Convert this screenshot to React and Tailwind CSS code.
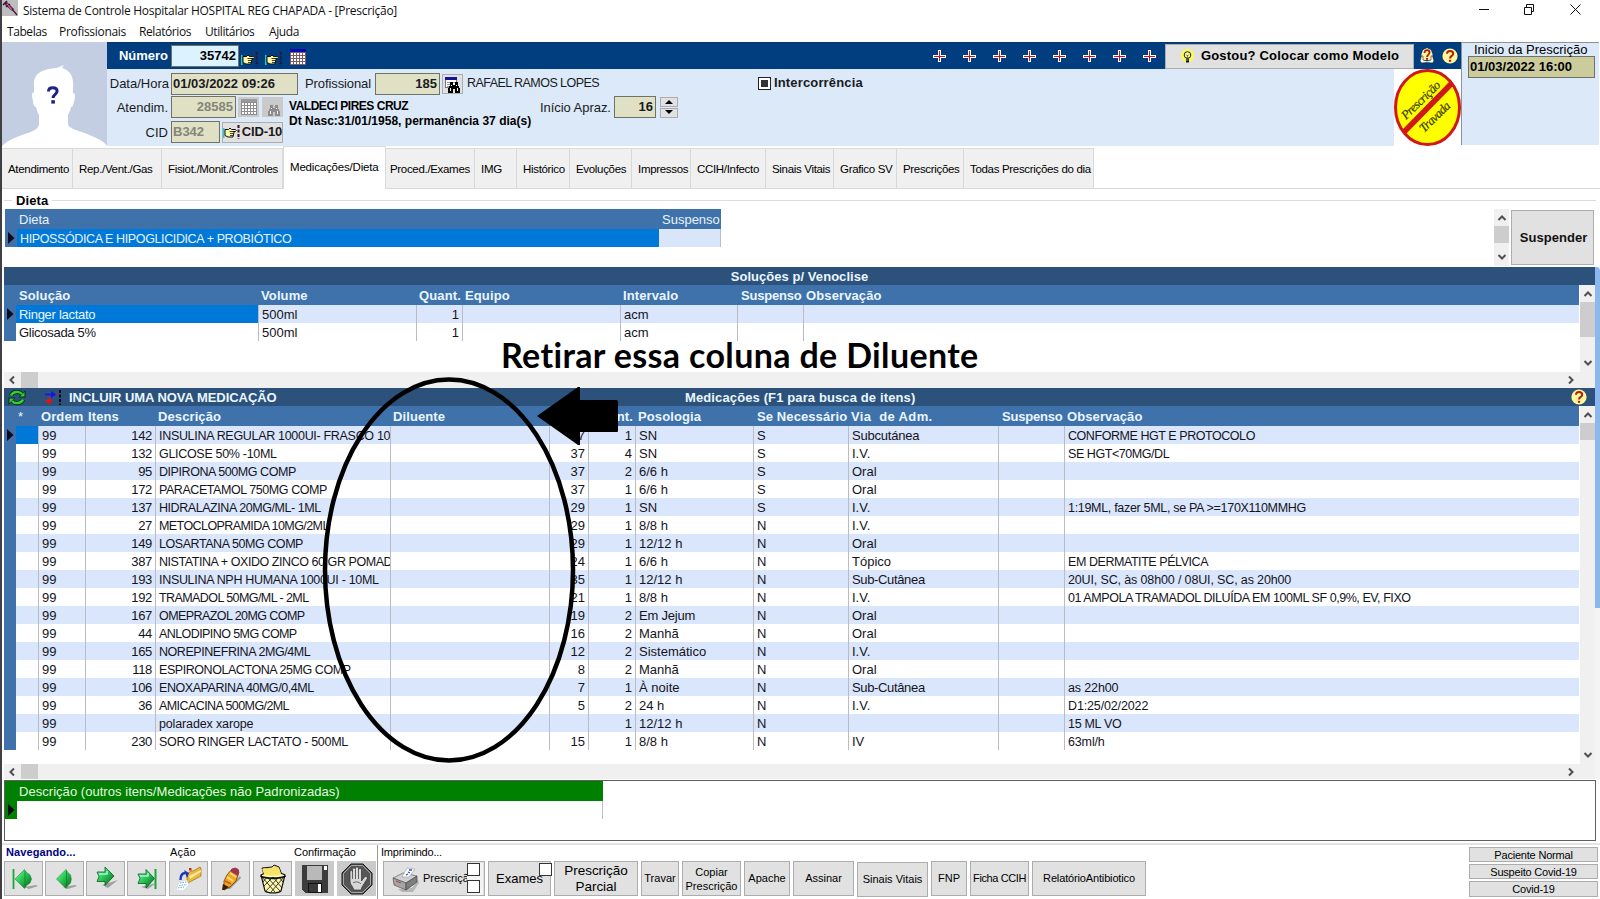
import React from "react";

/* ---------- icons ---------- */
const Hand = () => (
  <svg className="shrink-0" width="17" height="14" viewBox="0 0 17 14">
    <rect x="0" y="3" width="1.500" height="10" fill="#28c8c8" />
    <path d="M2 4.500h3.500l1.500-1.500 1.500 1.500h4q1.500 1 0 2H9.500h1.500v2h-.500v2h-.500v1.500H5l-3-1.500z" fill="#fdf6a6" stroke="#111" strokeWidth="1" />
    <path d="M6.500 6.500h3M7 8.500h3.500M7 10.500h3" stroke="#111" strokeWidth=".8" />
    <path d="M15.500 0v14" stroke="#1a1030" strokeWidth="2" strokeDasharray="3 1.500" />
    <path d="M15 1v12" stroke="#b0304a" strokeWidth="1" strokeDasharray="1 3.500" />
  </svg>
);
const Calendar = ({ off }) => (
  <svg width="16" height="16" viewBox="0 0 16 16" shapeRendering="crispEdges">
    <rect x="0" y="1" width="16" height="15" fill={off ? "#8c8c8c" : "#7b5c66"} />
    <rect x="0" y="0" width="16" height="3" fill={off ? "#9a9a9a" : "#0a0ab4"} />
    {[0, 1, 2, 3].map((r) =>
      [0, 1, 2, 3, 4].map((c) => (
        <rect key={r + "-" + c} x={1 + c * 3} y={4 + r * 3} width="2" height="2" fill="#fff" />
      ))
    )}
  </svg>
);
const Binoculars = ({ off, page }) => (
  <svg width="17" height="17" viewBox="0 0 17 17" shapeRendering="crispEdges">
    {page && <path d="M1.500 1.500h11v10h-11z" fill="#fff" stroke="#777" />}
    {page && <path d="M1 1h12v3H1z" fill="#1414a0" />}
    {page && <path d="M3 6h8M3 8h5M3 10h3" stroke="#999" />}
    <g fill={off ? "#8c8c8c" : "#000"}>
      <path d="M6 6h3v3h2V6h3v3l2 4v4h-5v-4H9v4H4v-4l2-4z" />
    </g>
    <path d="M6 12v3M13 12v3M7 9v1M12 9v1" stroke="#fff" strokeWidth="1" />
  </svg>
);
const Bulb = () => (
  <svg width="15" height="15" viewBox="0 0 15 15">
    <circle cx="7.500" cy="6.500" r="6.800" fill="#f8f860" />
    <circle cx="7.500" cy="6" r="3.300" fill="#fcfc90" stroke="#222" strokeWidth="1" />
    <path d="M7.500 6v4M6 5.500l1.500 1.500L9 5.500" stroke="#555" strokeWidth=".7" fill="none" />
    <path d="M6 9.500h3v4H6z" fill="#111" />
    <path d="M6 11h2.500" stroke="#ddd" strokeWidth=".7" />
  </svg>
);
const Help = () => (
  <svg width="16" height="16" viewBox="0 0 16 16">
    <circle cx="8" cy="8" r="7.600" fill="#fff799" />
    <path d="M5 5.800C5 3.800 6.300 3 8 3s3.200.9 3.200 2.700C11.200 8 8 7.800 8 10.500" fill="none" stroke="#b02010" strokeWidth="2" />
    <rect x="6.900" y="11.800" width="2.200" height="2" fill="#b02010" />
  </svg>
);
const BookHelp = () => (
  <svg width="16" height="16" viewBox="0 0 16 16">
    <path d="M2.500 6l1.500-4 4-2 4 2 1.500 4v6h-11z" fill="#fff4a0" />
    <path d="M1 13l1.500-5h1.500v4l4 1 4-1V8h1.500l1.500 5-1.500 2-5.500-.500-5.500.500z" fill="#fff" stroke="#222" strokeWidth=".6" />
    <path d="M5.500 5c0-2 1-2.800 2.500-2.800s2.600 1 2.600 2.400C10.600 6.600 8 6.600 8 9" fill="none" stroke="#b02010" strokeWidth="1.800" />
    <rect x="7" y="10" width="2" height="1.800" fill="#b02010" />
  </svg>
);
const Syringe = () => (
  <svg width="16" height="16" viewBox="0 0 16 16">
    <rect width="16" height="16" fill="#bdbdbd" />
    <path d="M2 3l3-1 7 7-2 2-7-6z" fill="#6d2858" />
    <path d="M1 5l4-4M4 7l4-3" stroke="#3b1030" strokeWidth="1.500" />
    <path d="M5 4l5 6" stroke="#c98ab8" strokeWidth="1" />
    <path d="M10 9l5 6" stroke="#45162f" strokeWidth="1.300" />
  </svg>
);
const Refresh = () => (
  <svg width="18" height="17" viewBox="0 0 18 17">
    <g fill="none" stroke="#062f06" strokeWidth="4.200">
      <path d="M3 6.500C4.500 2.500 11 1.500 14 5M15 10.500C13.500 14.500 7 15.500 4 12" />
    </g>
    <path d="M17.500 1v7.500H10.500zM.5 16V8.500h7z" fill="#062f06" />
    <g fill="none" stroke="#2fcf3c" strokeWidth="2.400">
      <path d="M3 6.500C4.500 2.500 11 1.500 14 5M15 10.500C13.500 14.500 7 15.500 4 12" />
    </g>
    <path d="M16.500 3v4.500H12zM1.500 14V9.500H6z" fill="#2fcf3c" />
  </svg>
);
const Insert = () => (
  <svg width="17" height="15" viewBox="0 0 17 15">
    <path d="M0 4.500h8" stroke="#1414e6" strokeWidth="1.600" />
    <path d="M6 1l5 3.500L6 8z" fill="#1414e6" />
    <path d="M0.500 11h7M4 7.500v7" stroke="#e81010" strokeWidth="1.400" />
    <circle cx="4" cy="11" r="2.300" fill="#e81010" />
    <path d="M15 0v15" stroke="#0a0a1c" strokeWidth="2" strokeDasharray="3 1.500" />
    <path d="M12.500 1v5" stroke="#a03050" strokeDasharray="2 1" />
  </svg>
);
const Plus = () => (
  <svg width="13" height="12" viewBox="0 0 13 12" shapeRendering="crispEdges">
    <path d="M5 0h3v5h5v3H8v4H5V8H0V5h5z" fill="#fff" />
    <path d="M6 1h1v5h5v1H7v4H6V7H1V6h5z" fill="#c01828" />
  </svg>
);
const Avatar = () => (
  <svg className="block shrink-0" width="105" height="104" viewBox="0 0 105 104">
    <rect width="105" height="104" fill="#c4cee2" />
    <path
      d="M32 50V44C31 30 42 27 55 26l7-3-2 3c9 3 12 9 11 20v5c3 0 2 5 1 9-1 3-1 5-3 5-1 4-2 6-3 8v9c0 4 8 6 19 10 10 4 18 8 20 12H0c5-5 12-8 20-11 10-3 17-6 17-11v-9c-2-3-2-5-3-8-2 0-3-3-3-6-1-4-2-8 1-9z"
      fill="#fff"
    />
    <path d="M46.500 49.500c0-3 2-3.800 4.200-3.800 2.800 0 4.400 1.300 4.400 3.400 0 3.300-4 3.200-4 7" fill="none" stroke="#1d2286" strokeWidth="3" />
    <rect x="49.300" y="58.200" width="3.600" height="3.400" fill="#1d2286" />
  </svg>
);
const Stamp = () => (
  <svg className="block shrink-0" width="67" height="77" viewBox="0 0 67 77">
    <rect width="67" height="77" fill="#fff" />
    <ellipse cx="33.500" cy="38.500" rx="32" ry="37" fill="#ffff00" stroke="#d01818" strokeWidth="3" />
    <path d="M10 63L58 14" stroke="#d01818" strokeWidth="5.500" />
    <g fill="#3c3c00" fontFamily="'Liberation Serif', serif" fontStyle="italic" fontSize="12.500" stroke="#3c3c00" strokeWidth=".2">
      <text transform="translate(12 51) rotate(-44)" textLength="49">Prescrição</text>
      <text transform="translate(30 64) rotate(-44)" textLength="38">Travada</text>
    </g>
  </svg>
);
const Chev = ({ dir }) => {
  const d = {
    up: "M1.500 7L5 3.500 8.500 7",
    down: "M1.500 3L5 6.500 8.500 3",
    left: "M7 1.500L3.500 5 7 8.500",
    right: "M3 1.500L6.500 5 3 8.500",
  }[dir];
  return (
    <svg width="10" height="10" viewBox="0 0 10 10">
      <path d={d} fill="none" stroke="#505050" strokeWidth="2" />
    </svg>
  );
};
const RowMark = () => (
  <svg width="7" height="12" viewBox="0 0 7 12">
    <path d="M0 0l6.500 6L0 12z" fill="#050a1c" />
  </svg>
);

const gem = (
  <linearGradient id="gem" x1="0" y1="0" x2="1" y2="1">
    <stop offset="0" stopColor="#a0f0b4" />
    <stop offset=".4" stopColor="#2fd25a" />
    <stop offset="1" stopColor="#04601c" />
  </linearGradient>
);
const NavIcon = ({ kind }) => (
  <svg width="30" height="28" viewBox="0 0 30 28">
    <defs>{gem}</defs>
    {kind === "first" && (
      <>
        <path d="M15 22l12-2 2 1-9 3z" fill="#a0a0a0" />
        <path d="M4.500 4v20" stroke="#18a838" strokeWidth="1.800" />
        <path d="M6 14L15.500 4.500 17 7l4 3 1.500 4L21 18l-4 3-1.500 2.500z" fill="url(#gem)" stroke="#0a7a28" strokeWidth=".5" />
        <path d="M16 6v16" stroke="#0a7a28" strokeWidth=".7" />
      </>
    )}
    {kind === "prev" && (
      <>
        <path d="M13 22l12-2 2 1-9 3z" fill="#a0a0a0" />
        <path d="M6.500 14L16 4.500 17.500 7l3 3 .8 4-.8 4-3 3-1.500 2.500z" fill="url(#gem)" stroke="#0a7a28" strokeWidth=".5" />
        <path d="M16.500 6v16" stroke="#0a7a28" strokeWidth=".7" />
      </>
    )}
    {kind === "next" && (
      <>
        <path d="M11 20l16-5-10 8z" fill="#a0a0a0" />
        <path d="M6 7h8V2l9 9-9 9.500v-4H6l2-5z" fill="url(#gem)" stroke="#04601c" strokeWidth=".8" />
        <path d="M8 9h8v-3" fill="none" stroke="#a8f0e8" strokeWidth="1.500" />
      </>
    )}
    {kind === "last" && (
      <>
        <path d="M9 22l15-4-8 6z" fill="#a0a0a0" />
        <path d="M6 9h8V4.500l8.500 9L14 23v-4.500H6l2-5z" fill="url(#gem)" stroke="#04601c" strokeWidth=".8" />
        <path d="M8 11h8V8" fill="none" stroke="#a8f0e8" strokeWidth="1.500" />
        <path d="M23.500 4v20" stroke="#18a838" strokeWidth="2" />
      </>
    )}
  </svg>
);
const FolderIcon = () => (
  <svg width="28" height="30" viewBox="0 0 28 30">
    <path d="M12 10l4-3 2 0 7-4 1 1v8l-13 7-1-3z" fill="#e9b93c" stroke="#a66a10" strokeWidth=".7" />
    <path d="M14 12l12-6v2l-11 7z" fill="#fbe79a" />
    <path d="M4 18l8-2 2 5-6 6-7-1z" fill="#fff" stroke="#c0ccdc" strokeWidth=".5" />
    <path d="M5 19l7-1M4 21.500l8-1M3 24l6-1" stroke="#6aaede" strokeWidth="1" strokeDasharray="1.500 1" />
    <path d="M5.500 16c0-4 1-7 5-7" fill="none" stroke="#1838b8" strokeWidth="2.400" />
    <path d="M9 6l5 3-2 5z" fill="#1838b8" />
    <rect x="14" y="4" width="2.500" height="2.500" fill="#d02020" />
  </svg>
);
const PencilIcon = () => (
  <svg width="24" height="28" viewBox="0 0 24 28">
    <path d="M7 24l14-13 1 2-11 11z" fill="#9c9c9c" />
    <path d="M5 16l3-6 5-6 7 3-3 9-6 6-6 3z" fill="#f2a81e" stroke="#6a3a08" strokeWidth=".8" />
    <path d="M12 5c2-4 9-2 8 2l-1 4-7-4z" fill="#a0344e" />
    <path d="M11 8l6 4M8 12l6 4" stroke="#fbe08a" strokeWidth="1.600" />
    <path d="M4 19l6 3-5 3H3z" fill="#3a1c08" />
    <path d="M6 16l6 3" stroke="#d2541a" strokeWidth="1.500" />
  </svg>
);
const TrashIcon = () => (
  <svg width="28" height="30" viewBox="0 0 28 30">
    <path d="M5 11L3 4l10-1 2-2 5 2 3 8z" fill="#f6e268" stroke="#111" strokeWidth="1" />
    <path d="M7 9l1-5M12 10l5-8M18 10l2-5" stroke="#8a7a10" strokeWidth=".8" />
    <path d="M2 11c4-3 20-3 24 0l-4 16c-3 2.500-13 2.500-16 0z" fill="#fdf7ad" stroke="#111" strokeWidth="1.200" />
    <path d="M5 10l-2-5 10-1 2-2 5 2 2 6c-5 2-12 2-17 0z" fill="#f6e268" />
    <path d="M3 13l13 15M8 13l13 14M14 13l9 11M20 13l4 5M25 13L12 28M20 13L7 27M14 13L5 22M8 13l-4 5" stroke="#111" strokeWidth=".8" />
    <path d="M1.500 12c5 3 20 3 25 0" fill="none" stroke="#111" strokeWidth="1.800" />
  </svg>
);
const SaveIcon = () => (
  <svg width="26" height="28" viewBox="0 0 26 28" shapeRendering="crispEdges">
    <path d="M0 0h26v28H3l-3-3z" fill="#3c3c3c" />
    <rect x="5" y="1" width="15" height="14" fill="#b9b9b9" />
    <rect x="22" y="1" width="3" height="4" fill="#fff" />
    <path d="M6 18h14v10H6z" fill="#111" />
    <rect x="7" y="19" width="9" height="8" fill="#3a3a3a" />
    <rect x="16" y="19" width="3" height="8" fill="#fff" />
  </svg>
);
const StopIcon = () => (
  <svg width="32" height="32" viewBox="0 0 32 32">
    <path d="M10 1h12l9 9v12l-9 9H10l-9-9V10z" fill="#565656" stroke="#1a1a1a" />
    <path d="M10.500 2.500h11l8 8v11l-8 8h-11l-8-8v-11z" fill="none" stroke="#a8a8a8" />
    <path
      d="M9 17V9c0-2 2.500-2 2.500 0V6.500c0-2 3-2 3 0V5.500c0-2 3-2 3 0V7c0-2 3-2 3 0v11l3-4c1.500-1.500 3.500 0 2.500 2l-5 8-1 3h-7l-2-4c-1.500-2-2-3-2-6z"
      fill="#d8d8d8"
      stroke="#333"
      strokeWidth=".7"
    />
    <path d="M11.500 8v8M14.500 7v9M17.500 7v9M12 20c3-2 6-1 8 1" stroke="#444" strokeWidth=".8" fill="none" />
  </svg>
);
const PrinterIcon = () => (
  <svg className="shrink-0" width="28" height="26" viewBox="0 0 28 26">
    <path d="M6 23l14-1 6-8 1 3-6 9H10z" fill="#b5b5b5" />
    <path d="M1 12l10-5 14 3-11 7z" fill="#d0d0d0" stroke="#666" strokeWidth=".7" />
    <path d="M1 12l13 5v7L2 19z" fill="#a5a5a5" stroke="#555" strokeWidth=".7" />
    <path d="M14 17l11-7v6l-11 8z" fill="#7e7e7e" stroke="#444" strokeWidth=".7" />
    <path d="M10 11l5-9 8 1-6 8z" fill="#fff" stroke="#889" strokeWidth=".5" />
    <path d="M14 9l2-1M16 6l2 1M17 4l3 0" stroke="#3050d0" strokeWidth="1.300" />
    <path d="M4 15l5 2" stroke="#cc3030" strokeWidth="1" />
  </svg>
);

/* ---------- shared pieces ---------- */
const Field = ({ className = "", children }) => (
  <div className={"h-[22px] shrink-0 border border-[#6f7268] text-[13px] font-bold leading-[20px] " + className}>{children}</div>
);
const Btn = ({ className = "", children }) => (
  <div className={"flex shrink-0 items-center justify-center border border-[#adadad] bg-[#e1e1e1] " + className}>{children}</div>
);
const VBar = ({ className = "", thumb }) => (
  <div className={"flex w-[15px] shrink-0 flex-col items-center bg-[#f0f0f0] " + className}>
    <div className="flex h-[17px] shrink-0 items-center"><Chev dir="up" /></div>
    <div className={"w-full shrink-0 bg-[#cdcdcd] " + thumb} />
    <div className="flex-1" />
    <div className="flex h-[18px] shrink-0 items-center"><Chev dir="down" /></div>
  </div>
);
const HBar = ({ className = "" }) => (
  <div className={"flex items-center bg-[#f0f0f0] " + className}>
    <div className="flex w-[17px] pl-[3px]"><Chev dir="left" /></div>
    <div className="h-full w-[17px] bg-[#cdcdcd]" />
    <div className="flex-1" />
    <div className="mr-[19px] flex w-[10px] justify-center"><Chev dir="right" /></div>
  </div>
);

const solCols = "grid grid-cols-[12px_243px_158px_46px_158px_117px_66px_775px]";
const medCols = "grid grid-cols-[12px_23px_47px_70px_235px_159px_39px_47px_118px_95px_150px_66px_514px]";

const A = "tracking-[-0.14px]";
const B = "tracking-[-0.31px]";
const D = "tracking-[-0.44px]";
const E = "tracking-[-0.58px]";

const meds = [
  ["142", "INSULINA REGULAR 1000UI- FRASCO 10", "37", "1", "SN", "S", "Subcutánea", "CONFORME HGT E PROTOCOLO", B, D],
  ["132", "GLICOSE 50% -10ML", "37", "4", "SN", "S", "I.V.", "SE HGT<70MG/DL", B, D],
  ["95", "DIPIRONA 500MG COMP", "37", "2", "6/6 h", "S", "Oral", "", D, D],
  ["172", "PARACETAMOL 750MG COMP", "37", "1", "6/6 h", "S", "Oral", "", D, D],
  ["137", "HIDRALAZINA 20MG/ML- 1ML", "29", "1", "SN", "S", "I.V.", "1:19ML, fazer 5ML, se PA >=170X110MMHG", D, B],
  ["27", "METOCLOPRAMIDA 10MG/2ML", "29", "1", "8/8 h", "N", "I.V.", "", E, D],
  ["149", "LOSARTANA 50MG COMP", "29", "1", "12/12 h", "N", "Oral", "", D, D],
  ["387", "NISTATINA + OXIDO ZINCO 60 GR POMAD", "24", "1", "6/6 h", "N", "Tópico", "EM DERMATITE PÉLVICA", D, D],
  ["193", "INSULINA NPH HUMANA 1000UI - 10ML", "35", "1", "12/12 h", "N", "Sub-Cutânea", "20UI, SC, às 08h00 / 08UI, SC, as 20h00", B, A],
  ["192", "TRAMADOL 50MG/ML - 2ML", "21", "1", "8/8 h", "N", "I.V.", "01 AMPOLA TRAMADOL DILUÍDA EM 100ML SF 0,9%, EV, FIXO", E, D],
  ["167", "OMEPRAZOL 20MG COMP", "19", "2", "Em Jejum", "N", "Oral", "", E, D],
  ["44", "ANLODIPINO 5MG COMP", "16", "2", "Manhã", "N", "Oral", "", E, D],
  ["165", "NOREPINEFRINA 2MG/4ML", "12", "2", "Sistemático", "N", "I.V.", "", D, D],
  ["118", "ESPIRONOLACTONA 25MG COMP", "8", "2", "Manhã", "N", "Oral", "", D, D],
  ["106", "ENOXAPARINA 40MG/0,4ML", "7", "1", "À noite", "N", "Sub-Cutânea", "as 22h00", D, A],
  ["36", "AMICACINA 500MG/2ML", "5", "2", "24 h", "N", "I.V.", "D1:25/02/2022", E, A],
  ["", "polaradex xarope", "", "1", "12/12 h", "N", "", "15 ML VO", A, B],
  ["230", "SORO RINGER LACTATO - 500ML", "15", "1", "8/8 h", "N", "IV", "63ml/h", B, A],
];

const C = ({ className = "", right, last, tall, children }) => (
  <div
    className={
      "h-[18px] overflow-hidden whitespace-pre " +
      (tall ? "text-[12.5px] leading-[20px] " : "leading-[19px] ") +
      (last ? "" : "border-r border-[#b9bcc4] ") +
      (right ? "pr-[3px] text-right " : "pl-[3px] ") +
      className
    }
  >
    {children}
  </div>
);

const tabs = [
  ["Atendimento", "w-[71px] pl-[6px]"],
  ["Rep./Vent./Gas", "w-[89px] pl-[6px]"],
  ["Fisiot./Monit./Controles", "w-[121px] pl-[6px]"],
  ["Medicações/Dieta", "sel"],
  ["Proced./Exames", "w-[89px] pl-[4px]"],
  ["IMG", "w-[42px] pl-[6px]"],
  ["Histórico", "w-[53px] pl-[6px]"],
  ["Evoluções", "w-[62px] pl-[6px]"],
  ["Impressos", "w-[59px] pl-[6px]"],
  ["CCIH/Infecto", "w-[75px] pl-[6px]"],
  ["Sinais Vitais", "w-[68px] pl-[6px]"],
  ["Grafico SV", "w-[63px] pl-[6px]"],
  ["Prescrições", "w-[67px] pl-[6px]"],
  ["Todas Prescrições do dia", "w-[130px] pl-[6px]"],
];

function TitleAndMenu() {
  return (
    <div className="h-[42px] bg-white font-['Open_Sans',sans-serif] text-[12px] text-[#111]">
      <div className="flex h-[22px] items-start">
        <Syringe />
        <div className="ml-[5px] pt-[1px] text-[12px] leading-[20px] tracking-[-0.28px] whitespace-pre">
          Sistema de Controle Hospitalar HOSPITAL REG CHAPADA - [Prescrição]
        </div>
        <div className="flex-1" />
        <svg className="mt-[4px] mr-[19px]" width="102" height="11" viewBox="0 0 102 11" fill="none" stroke="#111">
          <path d="M0 5.500h10" />
          <path d="M45.500 3.500h7v7h-7zM47.500 3v-2.500h7v7H53M91.500.5l10 10M101.500.5l-10 10" />
        </svg>
      </div>
      <div className="flex h-[20px] pl-[5px] leading-[20px] tracking-[-0.42px]">
        <span className="w-[52px]">Tabelas</span>
        <span className="w-[80px] tracking-[-0.3px]">Profissionais</span>
        <span className="w-[66px]">Relatórios</span>
        <span className="w-[64px]">Utilitários</span>
        <span>Ajuda</span>
      </div>
    </div>
  );
}

function PatientHeader() {
  return (
    <div className="flex h-[104px]">
      <Avatar />
      <div className="flex w-[1354px] shrink-0 flex-col">
        <div className="flex h-[27px] items-center border-t border-[#0a3566] bg-[#003e7f]">
          <div className="w-[61px] text-right text-[13px] font-bold leading-[26px] text-white">Número</div>
          <Field className="ml-[3px] w-[68px] bg-[#dcf3ff] pr-[2px] text-right">35742</Field>
          <div className="ml-[2px] flex pt-[5px]"><Hand /></div>
          <div className="ml-[7px] flex pt-[5px]"><Hand /></div>
          <div className="ml-[8px] flex pt-[2px]"><Calendar /></div>
          <div className="flex-1" />
          <div className="mr-[9px] flex gap-[17px]">
            {[0, 1, 2, 3, 4, 5, 6, 7].map((i) => <Plus key={i} />)}
          </div>
          <Btn className="mr-[5px] h-[25px] w-[249px] gap-[6px] text-[13px] font-bold tracking-[0.2px] text-black"><Bulb />Gostou? Colocar como Modelo</Btn>
          <div className="flex gap-[7px] pr-[3px]"><BookHelp /><Help /></div>
        </div>
        <div className="flex h-[77px] bg-[#dce9f8]">
          <div className="flex-1 pt-[4px] text-[13px] text-[#1a1a22]">
            <div className="flex h-[22px] items-center">
              <div className="mb-[2px] w-[62px] text-right leading-[19px]">Data/Hora</div>
              <Field className="ml-[2px] w-[127px] bg-[#e0e1c4] pl-[1px]">01/03/2022 09:26</Field>
              <div className="mb-[2px] ml-[7px] w-[70px] leading-[19px] tracking-[-0.1px]">Profissional</div>
              <Field className="w-[65px] bg-[#e0e1c4] pr-[2px] text-right">185</Field>
              <Btn className="ml-[2px] h-[20px] w-[21px]"><Binoculars page /></Btn>
              <div className="mb-[2px] ml-[4px] w-[291px] text-[12.5px] leading-[20px] tracking-[-0.55px]">RAFAEL RAMOS LOPES</div>
              <div className="mb-[2px] flex h-[13px] w-[13px] items-center justify-center border border-[#222] bg-white">
                <div className="h-[7px] w-[7px] bg-[#333]" />
              </div>
              <div className="mb-[2px] ml-[3px] text-[13px] font-bold leading-[18px] tracking-[0.15px]">Intercorrência</div>
            </div>
            <div className="mt-[1px] flex">
              <div className="w-[176px] shrink-0">
                <div className="flex h-[22px] items-center">
                  <div className="w-[61px] text-right leading-[19px]">Atendim.</div>
                  <Field className="ml-[3px] w-[65px] bg-[#e0e1c4] pr-[2px] text-right text-[#85857a]">28585</Field>
                  <div className="ml-[2px] flex h-[20px] w-[21px] items-center justify-center bg-[#cacaca]"><Calendar off /></div>
                  <div className="ml-[3px] flex h-[20px] w-[21px] items-center justify-center bg-[#cacaca]"><Binoculars off /></div>
                </div>
                <div className="mt-[3px] flex h-[22px] items-center">
                  <div className="w-[61px] text-right leading-[19px]">CID</div>
                  <Field className="ml-[3px] w-[49px] bg-[#e0e1c4] pl-[1px] text-[#85857a]">B342</Field>
                  <Btn className="ml-[2px] h-[21px] w-[61px] gap-[2px] text-[13px] font-bold tracking-[-0.15px]"><Hand /><span className="whitespace-nowrap">CID-10</span></Btn>
                </div>
              </div>
              <div className="ml-[6px] w-[251px] shrink-0 pt-[3px] text-[12px] font-bold leading-[15px] text-black">
                <div className="tracking-[-0.48px]">VALDECI PIRES CRUZ</div>
                <div className="whitespace-nowrap tracking-[0.02px]">Dt Nasc:31/01/1958, permanência 37 dia(s)</div>
              </div>
              <div className="flex h-[22px] items-center">
                <div className="w-[74px] text-[13px] leading-[19px] tracking-[-0.05px]">Início Apraz.</div>
                <Field className="w-[42px] bg-[#e0e1c4] pr-[2px] text-right">16</Field>
                <div className="ml-[4px] flex flex-col gap-px">
                  <Btn className="h-[10px] w-[18px]"><svg width="8" height="5"><path d="M0 5l4-4 4 4z" /></svg></Btn>
                  <Btn className="h-[10px] w-[18px]"><svg width="8" height="5"><path d="M0 0l4 4 4-4z" /></svg></Btn>
                </div>
              </div>
            </div>
          </div>
          <Stamp />
        </div>
      </div>
      <div className="h-[103px] w-[138px] border-t border-l border-[#8f9297] bg-[#dce9f8] px-[6px] text-[13px]">
        <div className="h-[13px] pl-[6px] leading-[13px] whitespace-nowrap">Inicio da Prescrição</div>
        <Field className="w-[127px] bg-[#cccb9c] pl-[1px]">01/03/2022 16:00</Field>
      </div>
    </div>
  );
}

function Tabs() {
  return (
    <div className="flex h-[43px] items-end text-[11.5px] tracking-[-0.32px] text-black">
      {tabs.map(([label, cls]) =>
        cls === "sel" ? (
          <div key={label} className="h-[43px] w-[103px] shrink-0 border-x border-t border-[#dadada] bg-white pl-[6px] leading-[40px] whitespace-nowrap tracking-[-0.18px]">{label}</div>
        ) : (
          <div key={label} className={"h-[41px] shrink-0 border-y border-r border-[#d9d9d9] bg-[#f0f0f0] leading-[41px] whitespace-nowrap " + cls}>{label}</div>
        )
      )}
      <div className="h-px flex-1 bg-[#d9d9d9]" />
    </div>
  );
}

function Diet() {
  return (
    <div className="flex h-[78px] flex-col pl-[2px]">
      <div className="flex h-[20px] items-center pt-[2px]">
        <div className="h-px w-[8px] bg-[#dcdcdc]" />
        <div className="px-[4px] pt-px text-[13px] font-bold leading-[18px] tracking-[0.1px]">Dieta</div>
        <div className="mr-[4px] h-px flex-1 bg-[#dcdcdc]" />
      </div>
      <div className="flex h-[57px] pl-px">
        <div className="w-[716px] text-[13px]">
          <div className="flex h-[20px] bg-[#3f72ab] leading-[21px] text-[#e8f2fb]">
            <div className="w-[644px] pl-[14px]">Dieta</div>
            <div className="pl-[13px]">Suspenso</div>
          </div>
          <div className="flex h-[18px]">
            <div className="flex w-[12px] items-center bg-[#3f72ab] pl-[3px]"><RowMark /></div>
            <div className="w-[642px] bg-[#0078d7] pl-[3px] text-[12.5px] leading-[20px] tracking-[-0.38px] text-[#e8f2fb]">HIPOSSÓDICA E HIPOGLICIDICA + PROBIÓTICO</div>
            <div className="flex-1 border-r border-[#b9bcc4] bg-[#d9e5f8]" />
          </div>
        </div>
        <div className="flex-1" />
        <VBar className="mr-[2px] h-[57px]" thumb="h-[17px]" />
        <Btn className="mt-px mr-[6px] h-[55px] w-[83px] pl-[2px] text-[13px] font-bold tracking-[0.05px] text-[#111]">Suspender</Btn>
      </div>
    </div>
  );
}

function Solutions() {
  return (
    <div className="ml-[2px] w-[1591px]">
      <div className="h-[18px] bg-[#2c527b] text-center text-[13px] font-bold leading-[19px] tracking-[0.05px] text-[#eaf6ff]">Soluções p/ Venoclise</div>
      <div className="flex h-[87px] text-[13px] text-[#14141c]">
        <div className="w-[1576px] shrink-0">
          <div className={solCols + " h-[20px] w-[1575px] bg-[#3f72ab] font-bold leading-[21px] tracking-[0.12px] text-[#eaf6ff]"}>
            <span />
            <span className="pl-[3px]">Solução</span>
            <span className="pl-[2px]">Volume</span>
            <span className="pl-[2px]">Quant.</span>
            <span className="pl-[2px]">Equipo</span>
            <span className="pl-[2px]">Intervalo</span>
            <span className="pl-[3px] tracking-[-0.2px]">Suspenso</span>
            <span className="pl-[2px]">Observação</span>
          </div>
          <div className={solCols + " w-[1575px] bg-[#dae6fb]"}>
            <div className="flex items-center bg-[#3f72ab] pl-[3px]"><RowMark /></div>
            <C className="bg-[#0078d7] tracking-[-0.28px] text-[#eaf6ff]">Ringer lactato</C>
            <C>500ml</C><C right>1</C><C /><C>acm</C><C /><C last />
          </div>
          <div className={solCols + " w-[1575px]"}>
            <div className="bg-[#3f72ab]" />
            <C className="tracking-[-0.28px]">Glicosada 5%</C>
            <C>500ml</C><C right>1</C><C /><C>acm</C><C /><C last />
          </div>
        </div>
        <VBar thumb="h-[35px]" />
      </div>
      <HBar className="h-[16px]" />
    </div>
  );
}

function Medications() {
  return (
    <div className="ml-[2px] w-[1591px]">
      <div className="flex h-[18px] items-center bg-[#2c527b] pl-[4px] text-[13px] font-bold leading-[18px] text-[#eaf6ff]">
        <Refresh />
        <div className="ml-[19px]"><Insert /></div>
        <div className="ml-[7px] w-[616px] pt-px tracking-[-0.05px]">INCLUIR UMA NOVA MEDICAÇÃO</div>
        <div className="pt-px tracking-[0.12px]">Medicações (F1 para busca de itens)</div>
        <div className="flex-1" />
        <div className="mr-[8px]"><Help /></div>
      </div>
      <div className="flex h-[358px] text-[13px] text-[#14141c]">
        <div className="w-[1576px] shrink-0">
          <div className={medCols + " h-[20px] w-[1575px] bg-[#3f72ab] font-bold leading-[21px] tracking-[0.1px] whitespace-pre text-[#eaf6ff]"}>
            <span />
            <span className="pl-[2px] font-normal">*</span>
            <span className="pl-[2px]">Ordem</span>
            <span className="pl-[2px]">Itens</span>
            <span className="pl-[2px]">Descrição</span>
            <span className="pl-[2px]">Diluente</span>
            <span />
            <span className="pr-[3px] text-right">Quant.</span>
            <span className="pl-[2px]">Posologia</span>
            <span className="pl-[3px]">Se Necessário</span>
            <span className="pl-[2px] tracking-[0.35px]">Via  de Adm.</span>
            <span className="pl-[3px] tracking-[-0.2px]">Suspenso</span>
            <span className="pl-[2px]">Observação</span>
          </div>
          {meds.map((m, i) => (
            <div key={i} className={medCols + " w-[1575px] " + (i % 2 ? "bg-white" : "bg-[#dae6fb]")}>
              <div className="flex items-center bg-[#3f72ab] pl-[3px]">{i === 0 && <RowMark />}</div>
              <C className={i === 0 ? "bg-[#0078d7]" : ""} />
              <C>99</C>
              <C right className="tracking-[-0.3px]">{m[0]}</C>
              <C tall className={m[8]}>{m[1]}</C>
              <C />
              <C right>{m[2]}</C>
              <C right>{m[3]}</C>
              <C className={m[4] === "Em Jejum" ? "tracking-[-0.2px]" : ""}>{m[4]}</C>
              <C>{m[5]}</C>
              <C className={m[6] === "Sub-Cutânea" ? "tracking-[-0.35px]" : m[6] === "Subcutánea" ? "tracking-[-0.2px]" : ""}>{m[6]}</C>
              <C />
              <C tall last className={m[9]}>{m[7]}</C>
            </div>
          ))}
        </div>
        <VBar thumb="h-[17px]" />
      </div>
      <HBar className="h-[15px]" />
    </div>
  );
}

function Others() {
  return (
    <div className="mt-px ml-[2px] h-[61px] w-[1592px] border border-[#606060] bg-white">
      <div className="h-[20px] w-[598px] bg-[#008000] pl-[14px] text-[13px] leading-[21px] tracking-[0.04px] text-[#e6f8e0]">Descrição (outros itens/Medicações não Padronizadas)</div>
      <div className="flex h-[18px] w-[598px] border-r border-[#c0c0c0]">
        <div className="flex w-[12px] items-center bg-[#008000] pl-[3px]"><RowMark /></div>
      </div>
    </div>
  );
}

function Toolbar() {
  return (
    <div className="mt-[2px] flex h-[56px] border-t-2 border-[#e3e3e3] pl-[2px] text-[11px] text-black">
      <div className="flex w-[374px] shrink-0 flex-col border-r border-[#9a9a9a]">
        <div className="flex h-[16px] leading-[15px]">
          <span className="w-[165px] pl-[2px] font-bold text-[#000080] tracking-[0.1px]">Navegando...</span>
          <span className="w-[125px] pl-[1px] text-[11px] tracking-[0.2px]">Ação</span>
          <span className="tracking-[-0.05px]">Confirmação</span>
        </div>
        <div className="flex gap-[2px]">
          <Btn className="h-[35px] w-[39px]"><NavIcon kind="first" /></Btn>
          <Btn className="h-[35px] w-[39px]"><NavIcon kind="prev" /></Btn>
          <Btn className="h-[35px] w-[39px]"><NavIcon kind="next" /></Btn>
          <Btn className="h-[35px] w-[39px]"><NavIcon kind="last" /></Btn>
          <div className="ml-px flex gap-[3px]">
            <Btn className="h-[35px] w-[39px]"><FolderIcon /></Btn>
            <Btn className="h-[35px] w-[39px]"><PencilIcon /></Btn>
            <Btn className="h-[35px] w-[39px]"><TrashIcon /></Btn>
            <div className="flex h-[35px] w-[39px] shrink-0 items-center justify-center bg-[#cacaca]"><SaveIcon /></div>
            <div className="flex h-[35px] w-[39px] shrink-0 items-center justify-center bg-[#cacaca]"><StopIcon /></div>
          </div>
        </div>
      </div>
      <div className="flex flex-1 flex-col pl-[3px]">
        <div className="h-[16px] leading-[15px] tracking-[-0.2px]">Imprimindo...</div>
        <div className="flex gap-[3px] pl-[2px]">
          <Btn className="relative h-[35px] w-[102px]">
            <div className="flex w-full items-center pl-[8px]"><PrinterIcon /><span className="ml-[3px] whitespace-nowrap">Prescrição</span></div>
            <div className="absolute top-[1px] right-[1px] flex h-[32px] w-[16px] flex-col gap-[4px] bg-[#f4f4f4]">
              <span className="h-[13px] w-[13px] border border-[#333] bg-white" />
              <span className="h-[13px] w-[13px] border border-[#333] bg-white" />
            </div>
          </Btn>
          <Btn className="relative h-[35px] w-[63px] text-[13px]">
            Exames
            <span className="absolute top-[1px] right-[-2px] h-[13px] w-[13px] border border-[#333] bg-white" />
          </Btn>
          <Btn className="h-[35px] w-[84px] text-center text-[13.5px] leading-[16px] tracking-[-0.05px]">Prescrição<br />Parcial</Btn>
          <Btn className="h-[35px] w-[38px]">Travar</Btn>
          <Btn className="h-[35px] w-[59px] text-center leading-[14px]">Copiar<br />Prescrição</Btn>
          <Btn className="h-[35px] w-[46px]">Apache</Btn>
          <Btn className="h-[35px] w-[61px]">Assinar</Btn>
          <Btn className="mt-px h-[35px] w-[71px]">Sinais Vitais</Btn>
          <Btn className="h-[35px] w-[36px]">FNP</Btn>
          <Btn className="h-[35px] w-[59px] tracking-[-0.4px]">Ficha CCIH</Btn>
          <Btn className="h-[35px] w-[114px] tracking-[-0.15px]">RelatórioAntibiotico</Btn>
        </div>
      </div>
      <div className="mt-[2px] mr-[2px] flex w-[129px] shrink-0 flex-col gap-[2px] tracking-[-0.2px]">
        <Btn className="h-[15px] pt-px">Paciente Normal</Btn>
        <Btn className="h-[15px] pt-px">Suspeito Covid-19</Btn>
        <Btn className="h-[16px] pt-px">Covid-19</Btn>
      </div>
    </div>
  );
}

export default function App() {
  return (
    <div className="relative h-[899px] w-[1600px] overflow-hidden bg-white font-['Liberation_Sans',Arial,sans-serif]">
      <div className="flex h-full">
        <div className="w-[2px] shrink-0 bg-[#3f3f44]" />
        <div className="w-[1598px] shrink-0">
          <TitleAndMenu />
          <PatientHeader />
          <Tabs />
          <Diet />
          <div className="flex">
            <div className="w-[1593px] shrink-0">
              <Solutions />
              <Medications />
            </div>
            <div className="flex w-[5px] flex-col bg-[#f4f4f4]">
              <div className="h-[341px] rounded-tr bg-[#8ab8ee]" />
            </div>
          </div>
          <Others />
          <Toolbar />
        </div>
      </div>
      <svg className="pointer-events-none absolute top-0 left-0" width="1600" height="899" viewBox="0 0 1600 899">
        <ellipse cx="449" cy="570" rx="124" ry="190.500" fill="none" stroke="#000" strokeWidth="4.500" />
        <path d="M537 416L578 387h2v13h36q2 0 2 2v29q0 1-1 1h-37v13h-2z" fill="#000" />
      </svg>
      <div className="absolute top-[341px] left-[501px] font-['Lato',sans-serif] text-[34px] leading-[28px] font-bold tracking-[0.35px] whitespace-nowrap text-black">
        Retirar essa coluna de Diluente
      </div>
    </div>
  );
}
